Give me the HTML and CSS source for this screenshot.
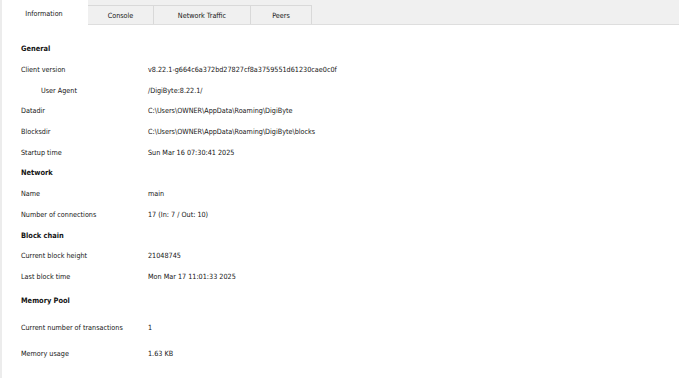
FILE: index.html
```html
<!DOCTYPE html>
<html>
<head>
<meta charset="utf-8">
<link rel="stylesheet" href="styles.css">
</head>
<body>
<div class="window">
  <div class="tabbar">
    <div class="tab active">Information</div>
    <div class="tab t-console">Console</div>
    <div class="tab t-net">Network Traffic</div>
    <div class="tab t-peers">Peers</div>
  </div>
  <div class="info">
    <div class="row head">General</div>
    <div class="row"><span class="label">Client version</span><span class="value">v8.22.1-g664c6a372bd27827cf8a3759551d61230cae0c0f</span></div>
    <div class="row"><span class="label indent">User Agent</span><span class="value">/DigiByte:8.22.1/</span></div>
    <div class="row"><span class="label">Datadir</span><span class="value">C:\Users\OWNER\AppData\Roaming\DigiByte</span></div>
    <div class="row"><span class="label">Blocksdir</span><span class="value">C:\Users\OWNER\AppData\Roaming\DigiByte\blocks</span></div>
    <div class="row"><span class="label">Startup time</span><span class="value">Sun Mar 16 07:30:41 2025</span></div>
    <div class="row head">Network</div>
    <div class="row"><span class="label">Name</span><span class="value">main</span></div>
    <div class="row"><span class="label">Number of connections</span><span class="value">17 (In: 7 / Out: 10)</span></div>
    <div class="row head">Block chain</div>
    <div class="row"><span class="label">Current block height</span><span class="value">21048745</span></div>
    <div class="row"><span class="label">Last block time</span><span class="value">Mon Mar 17 11:01:33 2025</span></div>
    <div class="row head mempool">Memory Pool</div>
    <div class="row tall"><span class="label">Current number of transactions</span><span class="value">1</span></div>
    <div class="row tall2"><span class="label">Memory usage</span><span class="value">1.63 KB</span></div>
  </div>
</div>
</body>
</html>
```
FILE: styles.css
```css
html, body {
  margin: 0;
  padding: 0;
  background: #ffffff;
}
.window {
  width: 679px;
  height: 378px;
  box-sizing: border-box;
  border-left: 2px solid #ececec;
  font-family: "DejaVu Sans Condensed", "DejaVu Sans", sans-serif;
  font-stretch: condensed;
  font-size: 7.2px;
  color: #141414;
  overflow: hidden;
}
.tabbar {
  display: flex;
  align-items: flex-end;
  height: 24px;
  background: #f0f0f0;
  border-bottom: 1px solid #dedede;
  margin-left: -2px;
}
.tab {
  display: flex;
  align-items: center;
  justify-content: center;
  box-sizing: border-box;
  height: 19px;
  border: 1px solid #d9d9d9;
  border-bottom: none;
  border-left: none;
  background: #f0f0f0;
}
.tab.active {
  width: 88px;
  height: 25px;
  margin-bottom: -1px;
  background: #ffffff;
  border: none;
  padding-top: 2px;
}
.t-console { width: 66px; }
.t-net { width: 97px; }
.t-peers { width: 61px; }
.info {
  padding: 13.5px 0 0 19px;
  display: flex;
  flex-direction: column;
}
.row {
  display: flex;
  align-items: center;
  height: 20.7px;
}
.head {
  font-weight: bold;
  font-size: 7.4px;
}
.label {
  width: 127px;
  flex: none;
}
.indent {
  padding-left: 20px;
  box-sizing: border-box;
}
.mempool {
  margin-top: 3px;
}
.tall {
  margin-top: 7px;
}
.tall2 {
  margin-top: 5.5px;
}
```
